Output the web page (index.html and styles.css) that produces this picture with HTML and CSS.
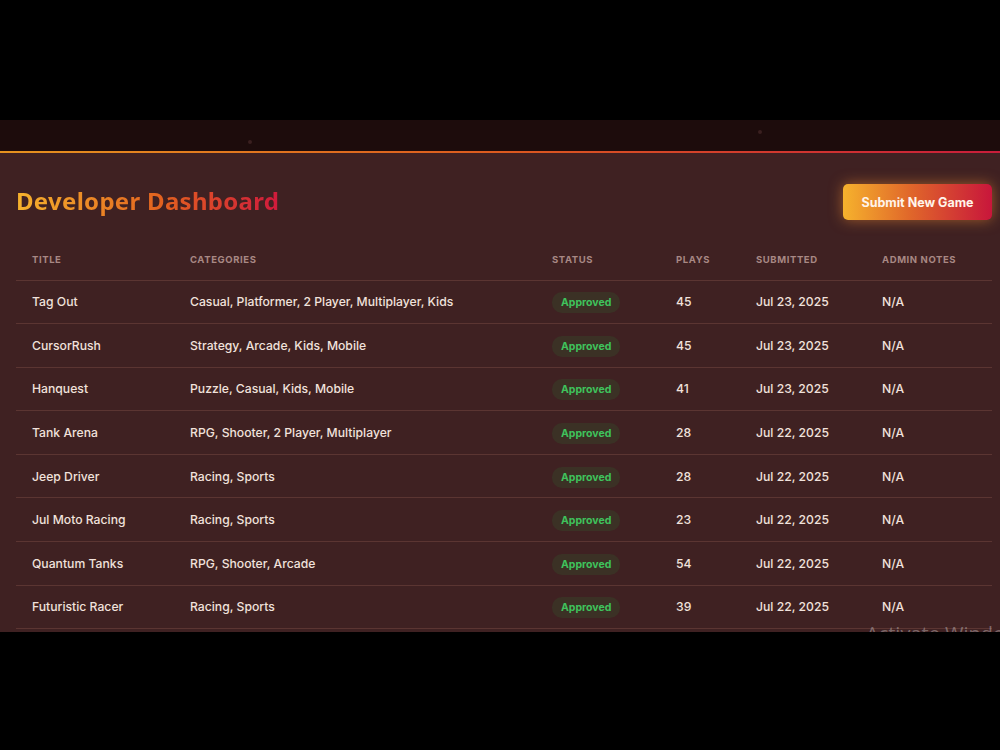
FILE: index.html
```html
<!DOCTYPE html>
<html lang="en">
<head>
  <meta charset="UTF-8">
  <title>Developer Dashboard</title>
  <link rel="stylesheet" href="styles.css">
</head>
<body>
  <div class="screen">
    <div class="topbar">
      <span class="dot dot-a"></span>
      <span class="dot dot-b"></span>
    </div>

    <div class="main">
      <div class="page-head">
        <h1 class="page-title">Developer Dashboard</h1>
        <button class="submit-btn">Submit New Game</button>
      </div>

      <table class="games">
        <colgroup>
          <col class="c-title">
          <col class="c-cats">
          <col class="c-status">
          <col class="c-plays">
          <col class="c-date">
          <col class="c-notes">
        </colgroup>
        <thead>
          <tr>
            <th>Title</th>
            <th>Categories</th>
            <th>Status</th>
            <th>Plays</th>
            <th>Submitted</th>
            <th>Admin Notes</th>
          </tr>
        </thead>
        <tbody>
          <tr>
            <td>Tag Out</td>
            <td>Casual, Platformer, 2 Player, Multiplayer, Kids</td>
            <td><span class="badge">Approved</span></td>
            <td>45</td>
            <td>Jul 23, 2025</td>
            <td>N/A</td>
          </tr>
          <tr>
            <td>CursorRush</td>
            <td>Strategy, Arcade, Kids, Mobile</td>
            <td><span class="badge">Approved</span></td>
            <td>45</td>
            <td>Jul 23, 2025</td>
            <td>N/A</td>
          </tr>
          <tr>
            <td>Hanquest</td>
            <td>Puzzle, Casual, Kids, Mobile</td>
            <td><span class="badge">Approved</span></td>
            <td>41</td>
            <td>Jul 23, 2025</td>
            <td>N/A</td>
          </tr>
          <tr>
            <td>Tank Arena</td>
            <td>RPG, Shooter, 2 Player, Multiplayer</td>
            <td><span class="badge">Approved</span></td>
            <td>28</td>
            <td>Jul 22, 2025</td>
            <td>N/A</td>
          </tr>
          <tr>
            <td>Jeep Driver</td>
            <td>Racing, Sports</td>
            <td><span class="badge">Approved</span></td>
            <td>28</td>
            <td>Jul 22, 2025</td>
            <td>N/A</td>
          </tr>
          <tr>
            <td>Jul Moto Racing</td>
            <td>Racing, Sports</td>
            <td><span class="badge">Approved</span></td>
            <td>23</td>
            <td>Jul 22, 2025</td>
            <td>N/A</td>
          </tr>
          <tr>
            <td>Quantum Tanks</td>
            <td>RPG, Shooter, Arcade</td>
            <td><span class="badge">Approved</span></td>
            <td>54</td>
            <td>Jul 22, 2025</td>
            <td>N/A</td>
          </tr>
          <tr>
            <td>Futuristic Racer</td>
            <td>Racing, Sports</td>
            <td><span class="badge">Approved</span></td>
            <td>39</td>
            <td>Jul 22, 2025</td>
            <td>N/A</td>
          </tr>
        </tbody>
      </table>
    </div>

    <div class="watermark">Activate Windows</div>
  </div>
</body>
</html>
```

FILE: styles.css
```css
body {
  margin: 0;
  background: #000;
  font-family: Inter, "Noto Sans", sans-serif;
}
.screen {
  position: relative;
  margin-top: 120px;
  height: 512px;
  overflow: hidden;
  background: #3f2122;
}
.topbar {
  position: relative;
  height: 30px;
  background: #1d0c0c;
  border-top: 1px solid #4b2b2b;
  border-bottom: 2px solid #d9541e;
  border-image: linear-gradient(90deg, #e6921f, #dc5a1f 50%, #c81d3b) 0 0 1 0;
}
.dot {
  position: absolute;
  width: 4px;
  height: 4px;
  border-radius: 50%;
  background: #3a2020;
}
.dot-a { left: 248px; top: 19px; }
.dot-b { left: 758px; top: 9px; }

.main {
  padding: 0 8px 0 16px;
}
.page-head {
  display: flex;
  justify-content: space-between;
  align-items: center;
  padding-top: 31px;
}
.page-title {
  margin: 0;
  margin-top: -4px;
  font-family: "Noto Sans", sans-serif;
  font-size: 24px;
  font-weight: 700;
  letter-spacing: 0.3px;
  background: linear-gradient(90deg, #f6b22d, #e2621f 55%, #cf1a3c);
  -webkit-background-clip: text;
  background-clip: text;
  color: transparent;
}
.submit-btn {
  width: 149px;
  height: 36px;
  border: none;
  border-radius: 5px;
  background: linear-gradient(90deg, #f6b22d, #e0672a 45%, #c8163b);
  box-shadow: 0 0 14px rgba(240, 140, 50, 0.55);
  color: #fff4ea;
  font-family: Inter, sans-serif;
  font-size: 12.5px;
  font-weight: 700;
  cursor: pointer;
}

.games {
  width: 976px;
  margin-top: 20px;
  border-collapse: collapse;
  table-layout: fixed;
}
.c-title { width: 158px; }
.c-cats { width: 362px; }
.c-status { width: 124px; }
.c-plays { width: 80px; }
.c-date { width: 126px; }
.c-notes { width: 126px; }
.games th {
  height: 39.5px;
  padding: 0 16px;
  text-align: left;
  font-size: 9.5px;
  font-weight: 700;
  letter-spacing: 0.6px;
  text-transform: uppercase;
  color: #a88884;
  border-bottom: 1px solid #5b3532;
}
.games td {
  height: 42.6px;
  padding: 0 16px;
  font-size: 12.2px;
  font-weight: 500;
  color: #f1e2dc;
  border-bottom: 1px solid #5b3532;
  white-space: nowrap;
}
.badge {
  display: inline-block;
  padding: 4px 9px;
  margin-top: 2px;
  border-radius: 10px;
  background: #3b3125;
  color: #3fc35c;
  font-size: 10.5px;
  font-weight: 700;
}
.watermark {
  position: absolute;
  left: 866px;
  top: 500px;
  font-family: "Open Sans", sans-serif;
  font-size: 20px;
  color: rgba(200, 190, 190, 0.45);
  white-space: nowrap;
}
```
